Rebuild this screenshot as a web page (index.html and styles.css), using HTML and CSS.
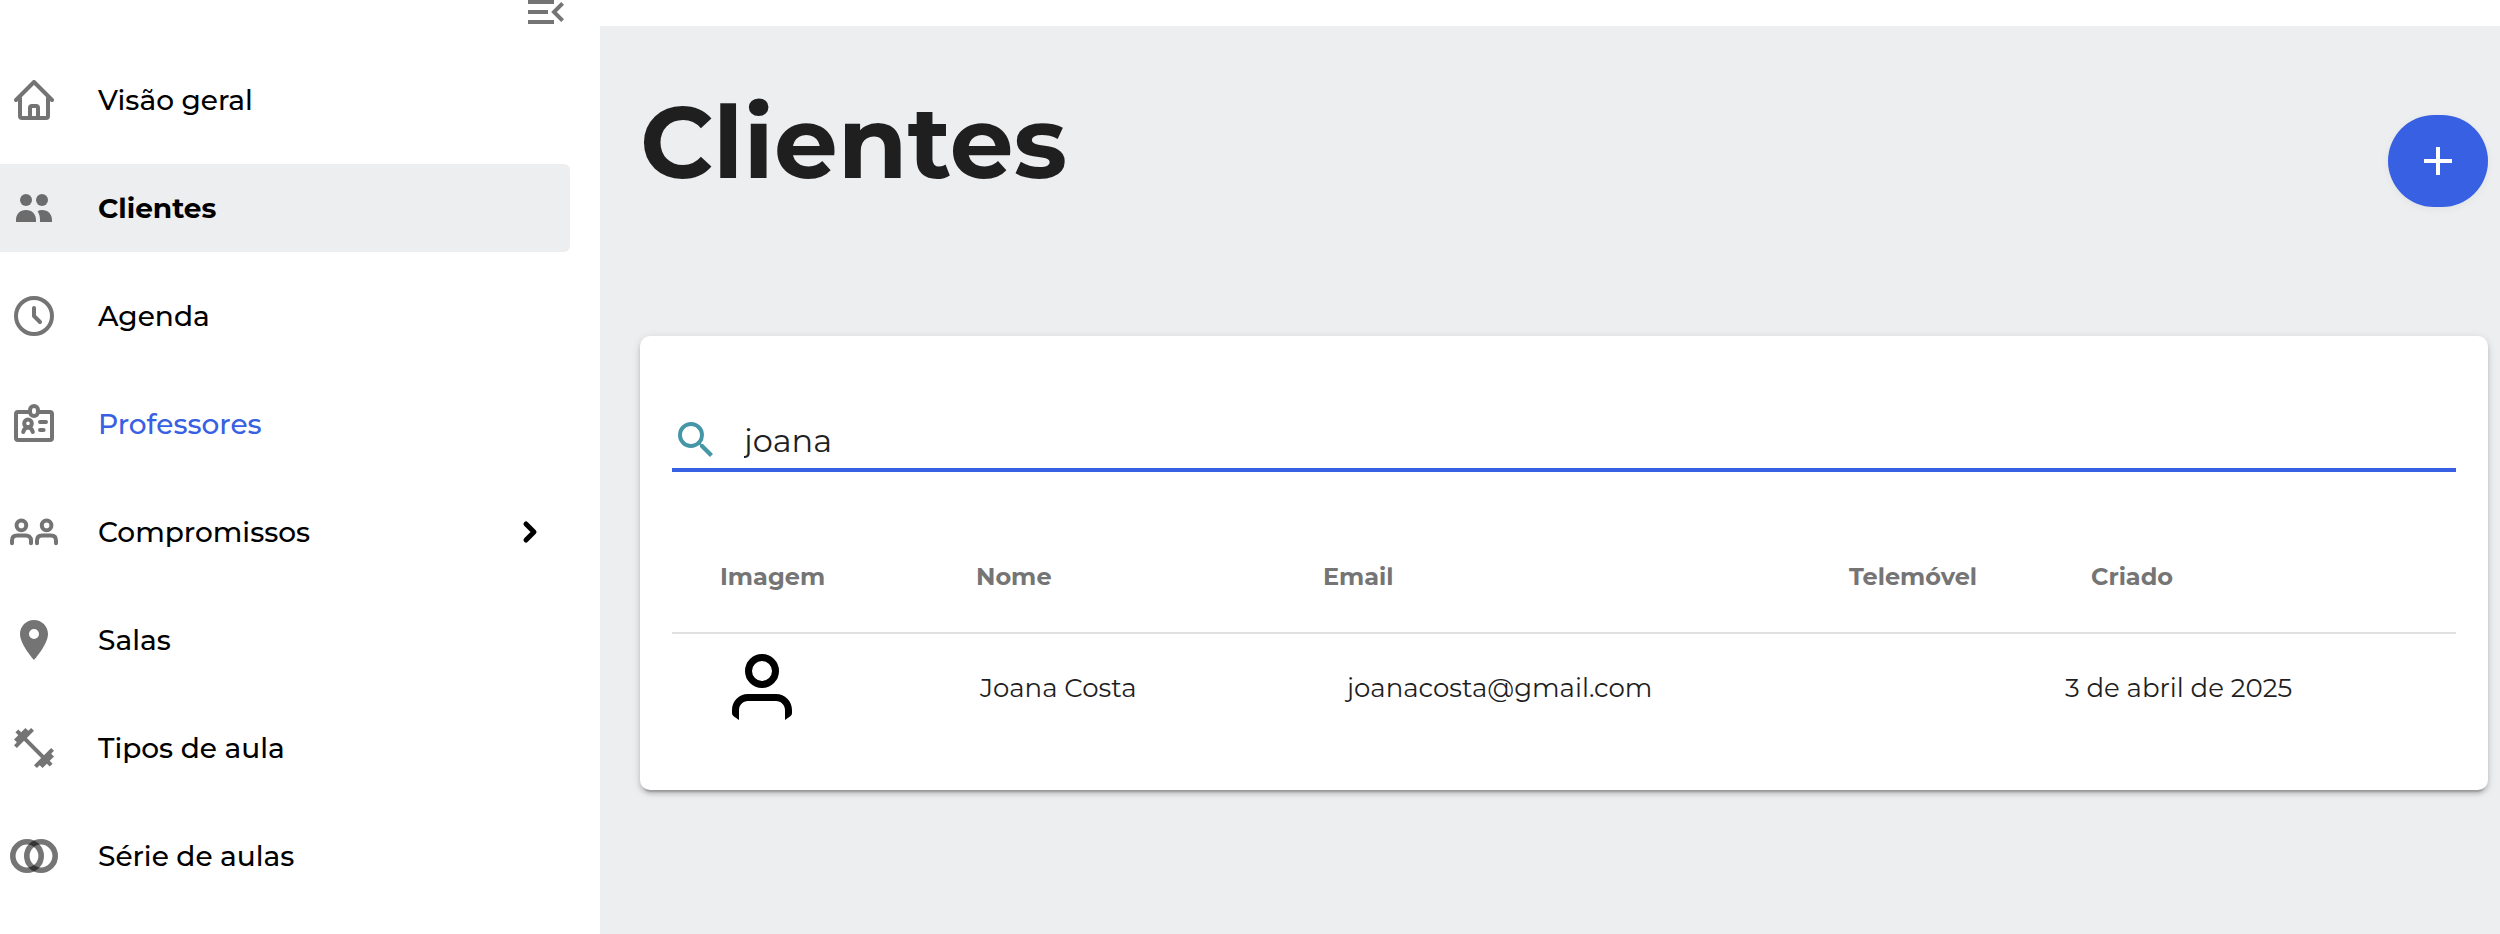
FILE: index.html
```html
<!DOCTYPE html>
<html lang="pt">
	<head>
		<meta charset="UTF-8">
		<title>Clientes</title>
		<link rel="stylesheet" href="styles.css">
	</head>

	<body>
		<aside class="sidebar">
			<button class="collapse" type="button" aria-label="Recolher menu">
				<svg class="icon" viewBox="0 0 24 24"><path d="M3 18h13v-2H3v2zM3 6v2h13V6H3zm0 7h10v-2H3v2zm18 2.59L17.42 12 21 8.41 19.59 7l-5 5 5 5L21 15.59z"/></svg>
			</button>

			<nav class="menu">
				<a class="item" href="#">
					<svg class="icon line" viewBox="0 0 24 24"><path d="M3 12l9-9 9 9M5 11v9a1 1 0 0 0 1 1h12a1 1 0 0 0 1-1v-9M10 21v-5a1 1 0 0 1 1-1h2a1 1 0 0 1 1 1v5"/></svg>
					<span>Visão geral</span>
				</a>
				<a class="item current" href="#">
					<svg class="icon" viewBox="0 0 24 24"><circle cx="8" cy="8" r="3"/><circle cx="16" cy="8" r="3"/><path d="M3 19v-1c0-3 2-5 5-5s5 2 5 5v1zM13.8 13.6c.7-.4 1.4-.6 2.2-.6 3 0 5 2 5 5v1h-6v-1c0-1.8-.4-3.2-1.2-4.4z"/></svg>
					<span>Clientes</span>
				</a>
				<a class="item" href="#">
					<svg class="icon line" viewBox="0 0 24 24"><circle cx="12" cy="12" r="9"/><path d="M12 8v4l3 3"/></svg>
					<span>Agenda</span>
				</a>
				<a class="item hover" href="#">
					<svg class="icon line" viewBox="0 0 24 24"><path d="M10 6H4a1 1 0 0 0-1 1v12a1 1 0 0 0 1 1h16a1 1 0 0 0 1-1V7a1 1 0 0 0-1-1h-6"/><rect x="10" y="3" width="4" height="5" rx="2"/><circle cx="9" cy="11.7" r="1.9"/><path d="M6.6 16c.4-1.5 1.2-2.2 2.4-2.2s2 .7 2.4 2.2M15 11h3M15 15h1.8"/></svg>
					<span>Professores</span>
				</a>
				<a class="item" href="#">
					<svg class="icon line" viewBox="0 0 24 24"><circle cx="5.7" cy="8.7" r="2.4"/><circle cx="18.3" cy="8.7" r="2.4"/><path d="M1 17.6v-1.4c0-1.6 1-2.5 2.5-2.5h4.4c1.5 0 2.6.9 2.6 2.5v1.4M13.5 17.6v-1.4c0-1.6 1-2.5 2.5-2.5h4.5c1.5 0 2.5.9 2.5 2.5v1.4"/></svg>
					<span>Compromissos</span>
					<svg class="arrow" viewBox="0 0 20 24"><path d="M6 4l8 8-8 8"/></svg>
				</a>
				<a class="item" href="#">
					<svg class="icon" viewBox="0 0 24 24"><path d="M12 2C8.13 2 5 5.13 5 9c0 5.25 7 13 7 13s7-7.75 7-13c0-3.87-3.13-7-7-7zm0 9.5a2.5 2.5 0 0 1 0-5 2.5 2.5 0 0 1 0 5z"/></svg>
					<span>Salas</span>
				</a>
				<a class="item" href="#">
					<svg class="icon" viewBox="0 0 24 24"><path d="M20.57 14.86L22 13.43 20.57 12 17 15.57 8.43 7 12 3.43 10.57 2 9.14 3.43 7.71 2 5.57 4.14 4.14 2.71 2.71 4.14l1.43 1.43L2 7.71l1.43 1.43L2 10.57 3.43 12 7 8.43 15.57 17 12 20.57 13.43 22l1.43-1.43L16.29 22l2.14-2.14 1.43 1.43 1.43-1.43-1.43-1.43L22 16.29z"/></svg>
					<span>Tipos de aula</span>
				</a>
				<a class="item" href="#">
					<svg class="icon rings" viewBox="0 0 24 24"><circle cx="8.5" cy="12" r="7.1"/><circle cx="15.5" cy="12" r="7.1"/></svg>
					<span>Série de aulas</span>
				</a>
			</nav>
		</aside>

		<main class="content">
			<header class="head">
				<h1>Clientes</h1>
				<button class="add" type="button" aria-label="Adicionar cliente">
					<svg viewBox="0 0 24 24"><path d="M19 13h-6v6h-2v-6H5v-2h6V5h2v6h6v2z"/></svg>
				</button>
			</header>

			<section class="card">
				<label class="search">
					<svg viewBox="0 0 24 24"><path d="M15.5 14h-.79l-.28-.27A6.47 6.47 0 0 0 16 9.5 6.5 6.5 0 1 0 9.5 16c1.61 0 3.09-.59 4.23-1.57l.27.28v.79l5 4.99L20.49 19l-4.99-5zm-6 0C7.01 14 5 11.99 5 9.5S7.01 5 9.5 5 14 7.01 14 9.5 11.99 14 9.5 14z"/></svg>
					<input type="text" value="joana" aria-label="Procurar">
				</label>

				<table class="list">
					<colgroup>
						<col class="w-image">
						<col class="w-name">
						<col class="w-email">
						<col class="w-phone">
						<col>
					</colgroup>
					<thead>
						<tr>
							<th>Imagem</th>
							<th>Nome</th>
							<th>Email</th>
							<th>Telemóvel</th>
							<th>Criado</th>
						</tr>
					</thead>
					<tbody>
						<tr>
							<td class="image">
								<svg viewBox="0 0 64 72"><circle cx="32" cy="19" r="13.5"/><path d="M2 61v-3c0-9 7-16 16-16h28c9 0 16 7 16 16v3c0 3-3 4-7 7V58c0-5-4-9-9-9H18c-5 0-9 4-9 9v10c-4-3-7-4-7-7z"/></svg>
							</td>
							<td class="name">Joana Costa</td>
							<td class="email">joanacosta@gmail.com</td>
							<td></td>
							<td class="date">3 de abril de 2025</td>
						</tr>
					</tbody>
				</table>
			</section>
		</main>
	</body>
</html>
```
FILE: styles.css
```css
*{
	margin: 0;
	padding: 0;
	box-sizing: border-box;
}

body{
	display: grid;
	grid-template-columns: 600px 1fr;
	min-height: 100vh;
	background: #ffffff;
	color: #1f1f1f;
	font-family: Montserrat, Inter, sans-serif;
	overflow: hidden;
}

button{
	border: none;
	background: none;
	cursor: pointer;
}

/* menu lateral */
.sidebar{
	padding-right: 30px;
}

.collapse{
	display: block;
	margin: -12px 0 20px auto;
	height: 48px;
}

.icon{
	display: block;
	flex: none;
	width: 48px;
	height: 48px;
	opacity: 0.54;
}

.line{
	fill: none;
	stroke: #000000;
	stroke-width: 2;
	stroke-linecap: round;
	stroke-linejoin: round;
}

.rings{
	fill: none;
	stroke: rgba(0, 0, 0, 0.54);
	stroke-width: 2.8;
	opacity: 1;
}

.menu{
	display: flex;
	flex-direction: column;
	gap: 20px;
}

.item{
	display: flex;
	align-items: center;
	gap: 40px;
	height: 88px;
	padding: 0 30px 0 10px;
	border-radius: 0 6px 6px 0;
	color: #000000;
	font-size: 28px;
	font-weight: 500;
	text-decoration: none;
}

.item.current{
	background: #edeef0;
	font-weight: 700;
}

.item.hover{
	color: #3860e2;
}

.arrow{
	width: 20px;
	height: 24px;
	margin-left: auto;
	fill: none;
	stroke: #000000;
	stroke-width: 5;
	stroke-linecap: round;
	stroke-linejoin: round;
}

/* conteudo */
.content{
	margin-top: 26px;
	padding: 56px 12px 40px 40px;
	background: #edeef0;
}

.head{
	display: flex;
	justify-content: space-between;
	align-items: center;
	height: 158px;
	margin-bottom: 96px;
}

.head h1{
	align-self: flex-start;
	font-size: 101px;
	line-height: 120px;
	font-weight: 700;
}

.add{
	display: flex;
	justify-content: center;
	align-items: center;
	width: 100px;
	height: 92px;
	border-radius: 46px;
	background: #3860e2;
	box-shadow: 0 2px 8px rgba(0, 0, 0, 0.05);
}

.add svg{
	width: 48px;
	height: 48px;
	fill: #ffffff;
}

.card{
	padding: 72px 32px 48px;
	border-radius: 10px;
	background: #ffffff;
	box-shadow: 0 6px 2px -4px rgba(0, 0, 0, 0.2), 0 4px 4px rgba(0, 0, 0, 0.14), 0 2px 10px rgba(0, 0, 0, 0.12);
}

.search{
	display: flex;
	align-items: center;
	gap: 24px;
	height: 64px;
	padding-top: 4px;
	border-bottom: 4px solid #3860e2;
}

.search svg{
	flex: none;
	width: 48px;
	height: 48px;
	fill: #4596a6;
}

.search input{
	flex: 1;
	border: none;
	outline: none;
	color: #1f1f1f;
	font-family: inherit;
	font-size: 32px;
	font-weight: 400;
}

.list{
	width: 100%;
	margin-top: 48px;
	table-layout: fixed;
	border-collapse: collapse;
	text-align: left;
}

.w-image{ width: 256px; }
.w-name{ width: 347px; }
.w-email{ width: 526px; }
.w-phone{ width: 242px; }

.list th{
	height: 113px;
	padding-left: 48px;
	border-bottom: 2px solid #e0e0e0;
	color: #757575;
	font-size: 24px;
	font-weight: 700;
}

.list td{
	height: 109px;
	font-size: 26px;
	font-weight: 400;
}

.list .image{ padding-left: 58px; }
.list .name{ padding-left: 52px; }
.list .email{ padding-left: 72px; }
.list .date{ padding-left: 22px; }

.image svg{
	display: block;
	width: 64px;
	height: 72px;
}

.image circle{
	fill: none;
	stroke: #000000;
	stroke-width: 7;
}
```
